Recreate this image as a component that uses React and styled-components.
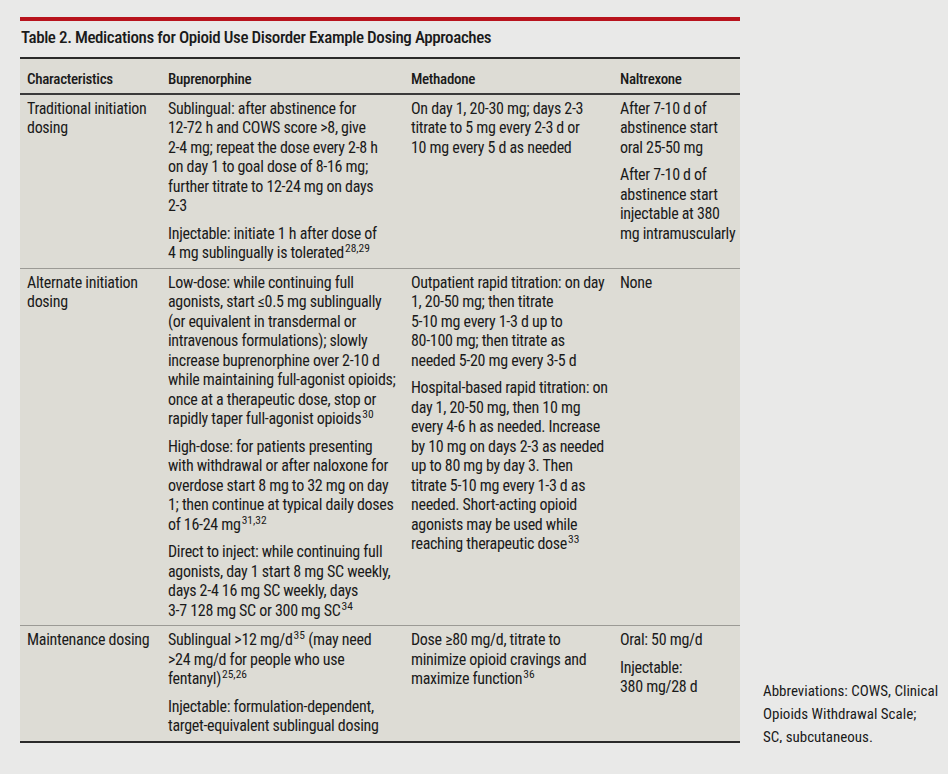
import React from 'react';
import styled, { createGlobalStyle } from 'styled-components';

const GlobalStyle = createGlobalStyle`
  html, body {
    margin: 0;
    padding: 0;
    background: #e9e9e8;
  }
  body {
    font-family: Roboto, 'Liberation Sans', sans-serif;
    font-stretch: 87.5%;
    color: #1a1a1a;
  }
`;

const COLS = '141px 243px 209px 127px';

const Page = styled.div`
  display: flex;
  align-items: flex-end;
  padding: 17px 0 0 20px;
`;

const TableBlock = styled.div`
  width: 720px;
  flex-shrink: 0;
  display: flex;
  flex-direction: column;
`;

const RedBar = styled.div`
  height: 4px;
  background: #b8131d;
`;

const Title = styled.div`
  padding: 5px 0 9px 1px;
  font-size: 17px;
  line-height: 22px;
  font-weight: 500;
  letter-spacing: -0.4px;
`;

const Table = styled.div`
  background: #dddcd5;
  border-top: 2px solid #2a2a2a;
  border-bottom: 2px solid #2a2a2a;
`;

const Row = styled.div`
  display: grid;
  grid-template-columns: ${COLS};
  border-bottom: ${(p) => (p.$header ? '2px solid #3a3a3a' : '1px solid #9b9a95')};
  &:last-child {
    border-bottom: none;
  }
`;

const Cell = styled.div`
  padding: ${(p) => (p.$header ? '11px 4px 3px 7px' : '4px 4px 5px 7px')};
  font-size: ${(p) => (p.$header ? '15px' : '16px')};
  font-weight: ${(p) => (p.$header ? 500 : 400)};
  letter-spacing: -0.3px;
  line-height: 19.5px;
  white-space: nowrap;
`;

const Para = styled.p`
  margin: 0;
  & + & {
    margin-top: 8px;
  }
`;

const Sup = styled.sup`
  font-size: 11.5px;
  line-height: 0;
  vertical-align: 6px;
  margin-left: 1px;
  letter-spacing: 0;
`;

const Note = styled.div`
  margin: 0 0 -6px 23px;
  font-size: 15px;
  line-height: 23px;
  white-space: nowrap;
`;

const header = ['Characteristics', 'Buprenorphine', 'Methadone', 'Naltrexone'];

// each cell: list of paragraphs, each paragraph a list of lines; [text, sup] for a superscript
const rows = [
  [
    [['Traditional initiation', 'dosing']],
    [
      [
        'Sublingual: after abstinence for',
        '12-72 h and COWS score >8, give',
        '2-4 mg; repeat the dose every 2-8 h',
        'on day 1 to goal dose of 8-16 mg;',
        'further titrate to 12-24 mg on days',
        '2-3',
      ],
      ['Injectable: initiate 1 h after dose of', ['4 mg sublingually is tolerated', '28,29']],
    ],
    [['On day 1, 20-30 mg; days 2-3', 'titrate to 5 mg every 2-3 d or', '10 mg every 5 d as needed']],
    [
      ['After 7-10 d of', 'abstinence start', 'oral 25-50 mg'],
      ['After 7-10 d of', 'abstinence start', 'injectable at 380', 'mg intramuscularly'],
    ],
  ],
  [
    [['Alternate initiation', 'dosing']],
    [
      [
        'Low-dose: while continuing full',
        'agonists, start ≤0.5 mg sublingually',
        '(or equivalent in transdermal or',
        'intravenous formulations); slowly',
        'increase buprenorphine over 2-10 d',
        'while maintaining full-agonist opioids;',
        'once at a therapeutic dose, stop or',
        ['rapidly taper full-agonist opioids', '30'],
      ],
      [
        'High-dose: for patients presenting',
        'with withdrawal or after naloxone for',
        'overdose start 8 mg to 32 mg on day',
        '1; then continue at typical daily doses',
        ['of 16-24 mg', '31,32'],
      ],
      [
        'Direct to inject: while continuing full',
        'agonists, day 1 start 8 mg SC weekly,',
        'days 2-4 16 mg SC weekly, days',
        ['3-7 128 mg SC or 300 mg SC', '34'],
      ],
    ],
    [
      [
        'Outpatient rapid titration: on day',
        '1, 20-50 mg; then titrate',
        '5-10 mg every 1-3 d up to',
        '80-100 mg; then titrate as',
        'needed 5-20 mg every 3-5 d',
      ],
      [
        'Hospital-based rapid titration: on',
        'day 1, 20-50 mg, then 10 mg',
        'every 4-6 h as needed. Increase',
        'by 10 mg on days 2-3 as needed',
        'up to 80 mg by day 3. Then',
        'titrate 5-10 mg every 1-3 d as',
        'needed. Short-acting opioid',
        'agonists may be used while',
        ['reaching therapeutic dose', '33'],
      ],
    ],
    [['None']],
  ],
  [
    [['Maintenance dosing']],
    [
      [
        [['Sublingual >12 mg/d', '35'], ' (may need'],
        '>24 mg/d for people who use',
        ['fentanyl)', '25,26'],
      ],
      ['Injectable: formulation-dependent,', 'target-equivalent sublingual dosing'],
    ],
    [['Dose ≥80 mg/d, titrate to', 'minimize opioid cravings and', ['maximize function', '36']]],
    [['Oral: 50 mg/d'], ['Injectable:', '380 mg/28 d']],
  ],
];

const renderLine = (line) => {
  if (typeof line === 'string') return line;
  if (Array.isArray(line[0])) {
    return (
      <>
        {line[0][0]}
        <Sup>{line[0][1]}</Sup>
        {line[1]}
      </>
    );
  }
  return (
    <>
      {line[0]}
      <Sup>{line[1]}</Sup>
    </>
  );
};

const App = () => {
  return (
    <>
      <GlobalStyle />
      <Page>
        <TableBlock>
          <RedBar />
          <Title>Table 2. Medications for Opioid Use Disorder Example Dosing Approaches</Title>
          <Table>
            <Row $header>
              {header.map((h) => (
                <Cell $header key={h}>
                  {h}
                </Cell>
              ))}
            </Row>
            {rows.map((row, ri) => (
              <Row key={ri}>
                {row.map((paras, ci) => (
                  <Cell key={ci}>
                    {paras.map((lines, pi) => (
                      <Para key={pi}>
                        {lines.map((line, li) => (
                          <React.Fragment key={li}>
                            {li > 0 && <br />}
                            {renderLine(line)}
                          </React.Fragment>
                        ))}
                      </Para>
                    ))}
                  </Cell>
                ))}
              </Row>
            ))}
          </Table>
        </TableBlock>
        <Note>
          Abbreviations: COWS, Clinical
          <br />
          Opioids Withdrawal Scale;
          <br />
          SC, subcutaneous.
        </Note>
      </Page>
    </>
  );
};

export default App;
